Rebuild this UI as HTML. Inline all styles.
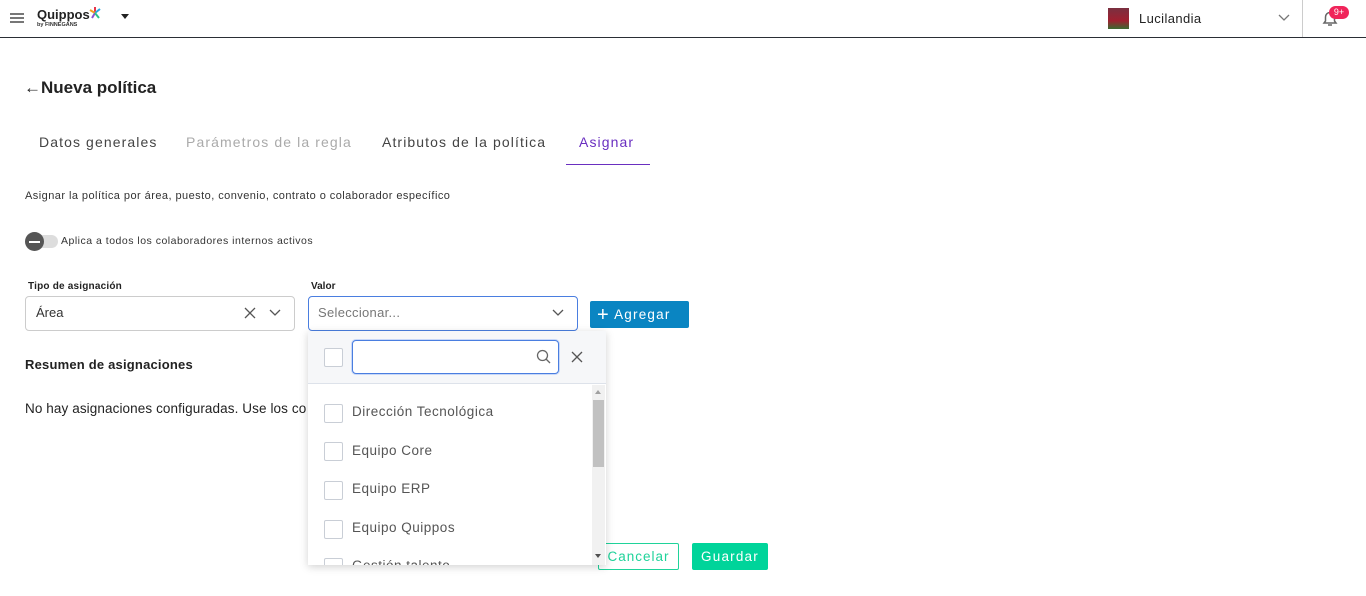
<!DOCTYPE html>
<html><head><meta charset="utf-8"><style>
*{box-sizing:border-box;margin:0;padding:0}
body{width:1366px;height:596px;overflow:hidden;background:#fff;font-family:"Liberation Sans",sans-serif;color:#222;position:relative}
.a{position:absolute;white-space:nowrap}
.hdr{position:absolute;left:0;top:0;width:1366px;height:38px;border-bottom:1px solid #2a2e35}
.cb{position:absolute;width:19px;height:19px;border:1px solid #c9ced6;border-radius:2px;background:#fff}
.item{position:absolute;left:352px;font-size:13.5px;color:#555;letter-spacing:.5px}
.tab{position:absolute;top:134px;font-size:14px;letter-spacing:1.1px}
</style></head><body>
<div class="hdr"></div>
<div class="a" style="left:10px;top:13px;width:14px;height:2px;background:#777;box-shadow:0 4px 0 #777,0 8px 0 #777"></div>
<div class="a" style="left:37px;top:7px;font-size:13px;font-weight:bold;color:#222">Quippos</div>
<div class="a" style="left:37px;top:22px;font-size:5.5px;font-weight:bold;color:#333">by FINNEGANS</div>
<svg class="a" style="left:88px;top:6px" width="14" height="14" viewBox="0 0 14 14"><path d="M7 1V7" stroke="#e8344a" stroke-width="2"/><path d="M7 7L12 3" stroke="#2aa8e0" stroke-width="2"/><path d="M7 7L2 4" stroke="#f4a020" stroke-width="2"/><path d="M7 7L4 12" stroke="#8a4fd0" stroke-width="2"/><path d="M7 7L11 12" stroke="#2ac48a" stroke-width="2"/></svg>
<div class="a" style="left:121px;top:14px;width:0;height:0;border-left:4px solid transparent;border-right:4px solid transparent;border-top:5px solid #222"></div>
<div class="a" style="left:1108px;top:8px;width:21px;height:21px;background:linear-gradient(#7a3040,#a02030 60%,#3a6a30)"></div>
<div class="a" style="left:1139px;top:11px;font-size:13px;color:#222;letter-spacing:.4px">Lucilandia</div>
<svg class="a" style="left:1278px;top:14px" width="12" height="8"><path d="M1 1l5 5 5-5" stroke="#777" fill="none" stroke-width="1.3"/></svg>
<div class="a" style="left:1302px;top:0;width:1px;height:37px;background:#ccc"></div>
<svg class="a" style="left:1321px;top:9px" width="18" height="19"><path d="M3 14h12l-1.5-2V8a4.5 4.5 0 0 0-9 0v4z" stroke="#666" fill="none" stroke-width="1.5"/><path d="M7 16h4" stroke="#666" stroke-width="1.5"/></svg>
<div class="a" style="left:1329px;top:6px;width:20px;height:13px;border-radius:7px;background:#f0245a;color:#fff;font-size:9px;text-align:center;line-height:13px">9+</div>

<div class="a" style="left:24px;top:78px;font-size:17px;font-weight:bold;color:#222">←Nueva política</div>
<div class="tab" style="left:39px;color:#444">Datos generales</div>
<div class="tab" style="left:186px;color:#aaa">Parámetros de la regla</div>
<div class="tab" style="left:382px;color:#444">Atributos de la política</div>
<div class="tab" style="left:579px;color:#6a2fc0">Asignar</div>
<div class="a" style="left:566px;top:164px;width:84px;height:1px;background:#6a2fc0"></div>

<div class="a" style="left:25px;top:190px;font-size:11px;color:#333;letter-spacing:.45px">Asignar la política por área, puesto, convenio, contrato o colaborador específico</div>
<div class="a" style="left:28px;top:235px;width:30px;height:13px;border-radius:7px;background:#ddd"></div>
<div class="a" style="left:25px;top:232px;width:19px;height:19px;border-radius:50%;background:#555"></div>
<div class="a" style="left:29px;top:241px;width:11px;height:2px;background:#fff"></div>
<div class="a" style="left:61px;top:235px;font-size:10.5px;color:#333;letter-spacing:.5px">Aplica a todos los colaboradores internos activos</div>

<div class="a" style="left:28px;top:281px;font-size:10px;font-weight:bold;color:#222;letter-spacing:.2px">Tipo de asignación</div>
<div class="a" style="left:25px;top:296px;width:270px;height:35px;border:1px solid #ccc;border-radius:4px"></div>
<div class="a" style="left:36px;top:305px;font-size:13px;color:#333">Área</div>
<svg class="a" style="left:244px;top:307px" width="12" height="12"><path d="M1 1l10 10M11 1L1 11" stroke="#555" stroke-width="1.3"/></svg>
<svg class="a" style="left:269px;top:309px" width="12" height="8"><path d="M1 1l5 5 5-5" stroke="#555" fill="none" stroke-width="1.3"/></svg>

<div class="a" style="left:311px;top:281px;font-size:10px;font-weight:bold;color:#222">Valor</div>
<div class="a" style="left:308px;top:296px;width:270px;height:35px;border:1px solid #4a7ee0;border-radius:4px"></div>
<div class="a" style="left:318px;top:305px;font-size:13px;color:#777;letter-spacing:.3px">Seleccionar...</div>
<svg class="a" style="left:552px;top:309px" width="12" height="8"><path d="M1 1l5 5 5-5" stroke="#555" fill="none" stroke-width="1.3"/></svg>

<div class="a" style="left:590px;top:301px;width:99px;height:27px;background:#0a85c2;border-radius:2px;color:#fff;font-size:13.5px;letter-spacing:1.2px;line-height:27px;padding-left:7px"><span style="font-size:20px;vertical-align:-2px">+</span> Agregar</div>

<div class="a" style="left:25px;top:357px;font-size:13px;font-weight:bold;color:#222;letter-spacing:.2px">Resumen de asignaciones</div>
<div class="a" style="left:25px;top:401px;font-size:13.5px;color:#222;letter-spacing:.1px">No hay asignaciones configuradas. Use los co</div>

<div class="a" style="left:598px;top:543px;width:81px;height:27px;border:1px solid #1fd39a;border-radius:2px;color:#1fd39a;font-size:13.5px;letter-spacing:1px;line-height:25px;text-align:center">Cancelar</div>
<div class="a" style="left:692px;top:543px;width:76px;height:27px;background:#00d49a;border-radius:2px;color:#fff;font-size:13.5px;letter-spacing:1.2px;line-height:27px;text-align:center">Guardar</div>

<div class="a" style="left:308px;top:331px;width:298px;height:234px;background:#fff;box-shadow:0 2px 8px rgba(0,0,0,.18);overflow:hidden">
 <div style="position:absolute;left:0;top:0;width:298px;height:53px;background:#f6f7f9;border-bottom:1px solid #dde2ea"></div>
</div>
<div class="cb" style="left:324px;top:348px"></div>
<div class="a" style="left:352px;top:340px;width:207px;height:34px;border:1.5px solid #4a7ee0;border-radius:4px;background:#fff;box-shadow:0 0 0 1px #c8d8f8"></div>
<svg class="a" style="left:536px;top:349px" width="15" height="15"><circle cx="6.5" cy="6.5" r="5" stroke="#666" fill="none" stroke-width="1.3"/><path d="M10 10l4 4" stroke="#666" stroke-width="1.3"/></svg>
<svg class="a" style="left:571px;top:351px" width="12" height="12"><path d="M1 1l10 10M11 1L1 11" stroke="#555" stroke-width="1.3"/></svg>
<div class="a" style="left:592px;top:385px;width:13px;height:180px;background:#f1f1f1"></div>
<div class="a" style="left:593px;top:400px;width:11px;height:67px;background:#c1c1c1"></div>
<div class="a" style="left:595px;top:390px;border-left:3px solid transparent;border-right:3px solid transparent;border-bottom:4px solid #a0a0a0"></div>
<div class="a" style="left:595px;top:554px;border-left:3px solid transparent;border-right:3px solid transparent;border-top:4px solid #505050"></div>
<div class="cb" style="left:324px;top:404px"></div><div class="item" style="top:404px">Dirección Tecnológica</div>
<div class="cb" style="left:324px;top:442px"></div><div class="item" style="top:443px">Equipo Core</div>
<div class="cb" style="left:324px;top:481px"></div><div class="item" style="top:481px">Equipo ERP</div>
<div class="cb" style="left:324px;top:520px"></div><div class="item" style="top:520px">Equipo Quippos</div>
<div class="a" style="left:308px;top:555px;width:284px;height:10px;overflow:hidden"><div class="cb" style="left:16px;top:3px"></div><div class="item" style="left:44px;top:3px">Gestión talento</div></div>
</body></html>
